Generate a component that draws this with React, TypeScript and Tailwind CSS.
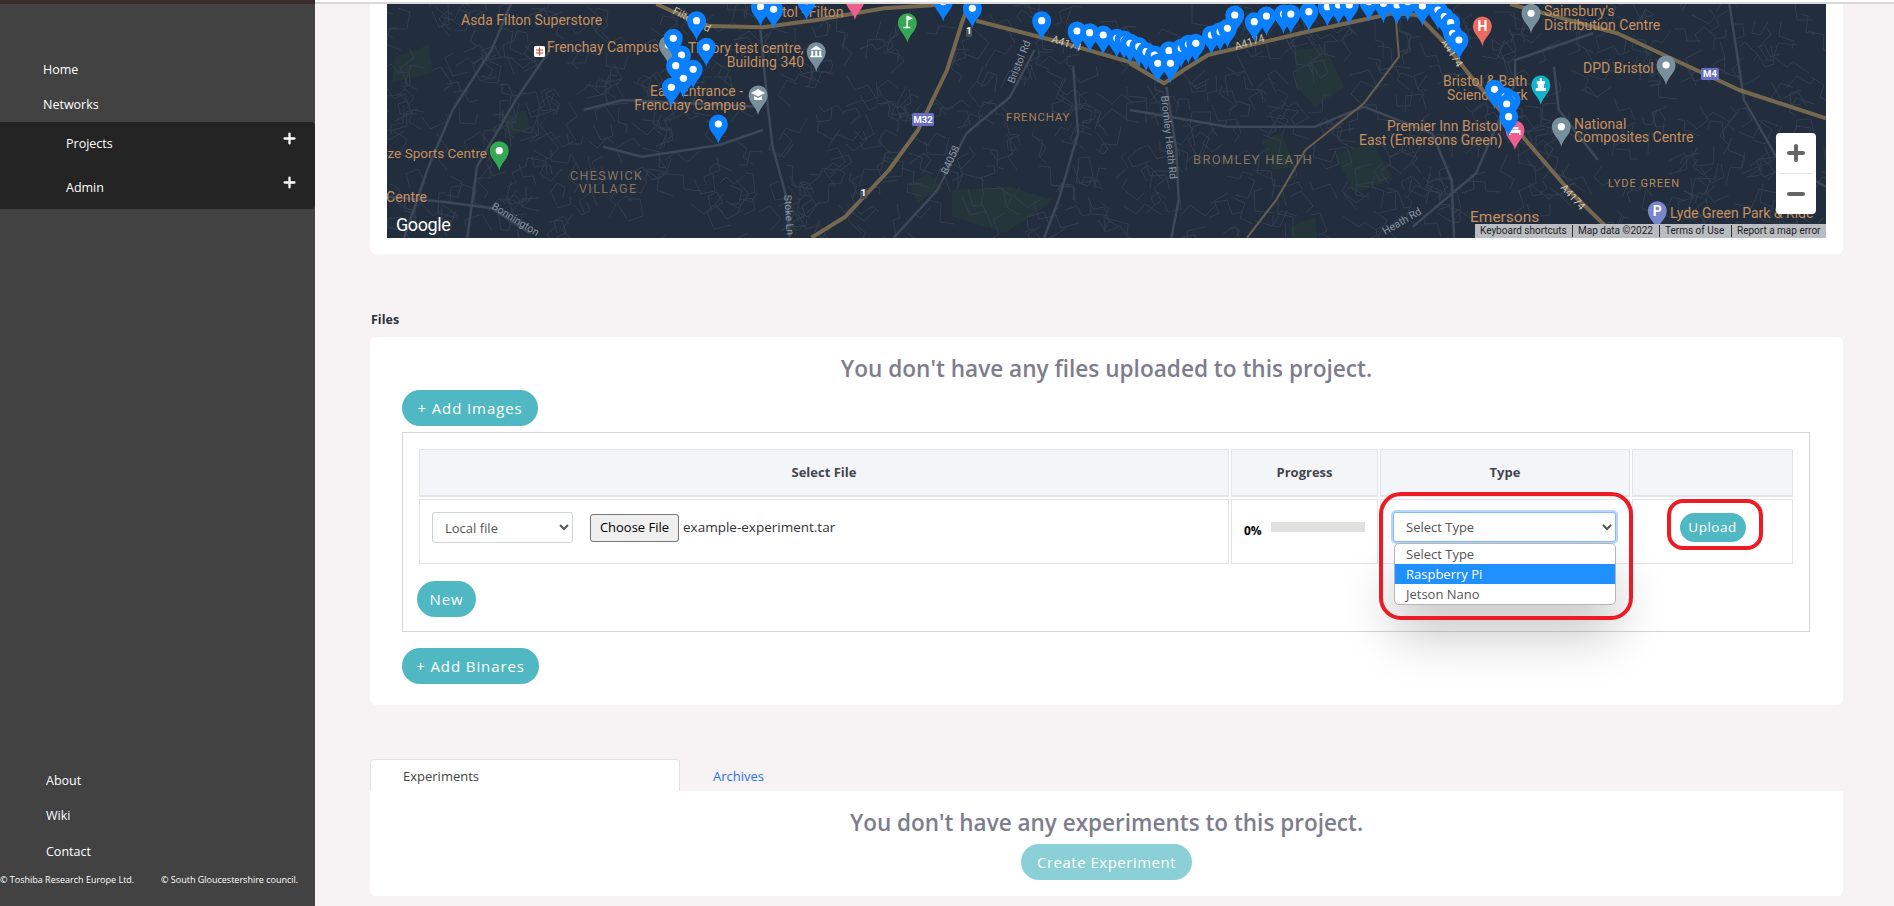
import { Plus, Minus } from "lucide-react";

type Pt = [number, number];
type Glyph = "H" | "P" | "museum" | "school" | "golf" | "bed" | "castle";

// map drawing is traced from two crops, so points are converted to page coords
const a = (x: number, y: number): Pt => [380 + x / 2.063, y / 3];
const b = (x: number, y: number): Pt => [1130 + x / 2.052, y / 3];
const line = (pts: Pt[]) => pts.map((p) => `${p[0].toFixed(1)},${p[1].toFixed(1)}`).join(" ");

const bluePins: Pt[] = [
  a(785, 20), a(812, 28), a(880, 2), a(1162, 5), a(1222, 25), a(653, 62), a(605, 115), a(673, 142), a(622, 165),
  a(646, 208), a(610, 197), a(626, 235), a(601, 262), a(698, 372), a(1365, 62), a(1438, 93), a(1464, 98), a(1492, 105),
  a(1520, 115), a(1535, 120), a(1548, 130), a(1565, 140),
  b(0, 130), b(18, 140), b(33, 155), b(50, 165), b(80, 152), b(105, 145), b(120, 133), b(135, 130), b(167, 105),
  b(185, 95), b(200, 85), b(215, 45), b(255, 65), b(280, 48), b(315, 42), b(330, 42), b(367, 35), b(405, 20),
  b(428, 15), b(450, 15), b(490, 5), b(520, 10), b(548, 15), b(570, 5), b(600, 18), b(632, 30), b(645, 50), b(658, 68), b(662, 100), b(675, 120),
  b(57, 190), b(83, 190), b(748, 268), b(770, 290), b(782, 300), b(773, 312), b(777, 350),
];

const otherPins: { p: Pt; c: string; glyph?: Glyph }[] = [
  { p: a(595, 135), c: "#78909c" },
  { p: a(900, 155), c: "#78909c", glyph: "museum" },
  { p: a(780, 285), c: "#78909c", glyph: "school" },
  { p: a(246, 452), c: "#34a853" },
  { p: a(1088, 68), c: "#34a853", glyph: "golf" },
  { p: a(980, 0), c: "#ec5f8f" },
  { p: b(823, 40), c: "#78909c" },
  { p: b(1100, 195), c: "#78909c" },
  { p: b(885, 380), c: "#78909c" },
  { p: b(843, 255), c: "#12b5cb", glyph: "castle" },
  { p: b(790, 390), c: "#ec5f8f", glyph: "bed" },
  { p: b(723, 78), c: "#ea6a5e", glyph: "H" },
  { p: b(1082, 632), c: "#7986cb", glyph: "P" },
];

const majorRoads: Pt[][] = [
  [a(570, 12), a(620, 45), a(680, 78), a(790, 82), a(900, 60), a(1040, 25), a(1180, 12)],
  [a(890, 713), a(960, 650), a(1050, 510), a(1110, 390), a(1170, 210), a(1200, 70), a(1215, 12)],
  [a(1230, 62), a(1400, 125), a(1568, 195)],
  [b(0, 190), b(40, 225), b(70, 250), b(110, 210), b(160, 165), b(350, 100), b(540, 40), b(590, 45), b(640, 120), b(700, 230), b(800, 400), b(900, 570), b(1000, 713)],
  [b(780, 12), b(1000, 100), b(1250, 270), b(1428, 355)],
];

const thinGold: Pt[][] = [
  [b(545, 50), b(552, 170), b(480, 310), b(360, 450), b(300, 600), b(240, 713)],
];

const mediumRoads: Pt[][] = [
  [a(270, 12), a(230, 150), a(150, 330), a(100, 500), a(50, 713)],
  [a(350, 150), a(280, 300), a(200, 500), a(180, 713)],
  [a(14, 590), a(130, 605), a(230, 625), a(310, 700)],
  [a(785, 90), a(800, 320), a(810, 440), a(840, 600), a(845, 713)],
  [a(1060, 713), a(1150, 570), a(1210, 400), a(1300, 290), a(1350, 150)],
  [a(1430, 200), a(1440, 400), a(1400, 600), a(1370, 713)],
  [a(420, 330), a(500, 300), a(780, 320)],
  [a(460, 440), a(540, 470), a(700, 435), a(790, 390)],
  [b(75, 260), b(95, 450), b(100, 600), b(85, 713)],
  [b(0, 330), b(200, 380), b(380, 380), b(480, 320)],
  [b(480, 320), b(620, 400), b(660, 540), b(665, 713)],
  [b(580, 680), b(710, 520), b(790, 250), b(790, 180), b(950, 100)],
  [b(870, 200), b(880, 330), b(960, 480)],
  [b(1230, 12), b(1260, 300), b(1330, 480), b(1428, 560)],
];

const greens: Pt[][] = [
  [a(30, 170), a(100, 135), a(110, 220), a(25, 245)],
  [a(255, 350), a(300, 330), a(310, 385), a(265, 410)],
  [a(1180, 570), a(1300, 560), a(1390, 600), a(1290, 700), a(1180, 650)],
  [a(1090, 550), a(1130, 520), a(1160, 560), a(1110, 610)],
  [b(340, 150), b(400, 140), b(440, 260), b(380, 320), b(340, 260)],
  [b(270, 420), b(310, 400), b(340, 500), b(290, 510)],
  [b(420, 460), b(500, 430), b(540, 540), b(460, 580)],
  [b(330, 680), b(380, 650), b(385, 713), b(330, 713)],
];

// small street texture, seeded so the picture stays the same between runs
function makeStreets() {
  const out: string[] = [];
  let seed = 41;
  const r = () => {
    seed = (seed * 16807) % 2147483647;
    return seed / 2147483647;
  };
  for (let i = 0; i < 800; i++) {
    let x = 387 + r() * 1439;
    let y = 4 + r() * 234;
    let d = `M${x.toFixed(0)} ${y.toFixed(0)}`;
    let ang = r() * 6.28;
    for (let j = 0; j < 3; j++) {
      const len = 7 + r() * 13;
      x += Math.cos(ang) * len;
      y += Math.sin(ang) * len;
      d += `L${x.toFixed(0)} ${y.toFixed(0)}`;
      ang += (r() > 0.5 ? 1 : -1) * 1.4;
    }
    out.push(d);
  }
  return out;
}
const streets = makeStreets();

function PinGlyph({ x, y, glyph }: { x: number; y: number; glyph?: Glyph }) {
  if (!glyph) return <circle cx={x} cy={y} r={3.6} fill="#fff" />;
  if (glyph === "H" || glyph === "P") {
    return (
      <text x={x} y={y + 5} fontSize={14} fontWeight={700} fill="#fff" textAnchor="middle">
        {glyph}
      </text>
    );
  }
  if (glyph === "museum") {
    return <path d={`M${x - 6} ${y - 2}L${x} ${y - 6}L${x + 6} ${y - 2}ZM${x - 5} ${y - 1}h2v5h-2zM${x - 1} ${y - 1}h2v5h-2zM${x + 3} ${y - 1}h2v5h-2zM${x - 6} ${y + 4}h12v1.5h-12z`} fill="#fff" />;
  }
  if (glyph === "school") {
    return <path d={`M${x} ${y - 6}L${x + 7} ${y - 2}L${x} ${y + 1.5}L${x - 7} ${y - 2}ZM${x - 4} ${y + 1}L${x} ${y + 3}L${x + 4} ${y + 1}V${y + 5}H${x - 4}Z`} fill="#fff" />;
  }
  if (glyph === "golf") {
    return <path d={`M${x - 1} ${y - 7}h1.5v12h-1.5zM${x + 0.5} ${y - 7}l5 2.5l-5 2.5zM${x - 4} ${y + 4}h7v1.5h-7z`} fill="#fff" />;
  }
  if (glyph === "bed") {
    return <path d={`M${x - 6} ${y - 4}h1.5v4h10v5h-1.5v-2h-8.5v2h-1.5zM${x - 3.5} ${y - 3}h7v2.5h-7z`} fill="#fff" />;
  }
  return <path d={`M${x - 1} ${y - 7}h2v3h3v3h-1v4h2v3h-10v-3h2v-4h-1v-3h3z`} fill="#fff" />;
}

function Pin({ p, c, glyph }: { p: Pt; c: string; glyph?: Glyph }) {
  const [x, y] = p;
  return (
    <g>
      <path
        d={`M${x} ${y + 20}C${x - 1.5} ${y + 12} ${x - 9.5} ${y + 8} ${x - 9.5} ${y}A9.5 9.5 0 1 1 ${x + 9.5} ${y}C${x + 9.5} ${y + 8} ${x + 1.5} ${y + 12} ${x} ${y + 20}Z`}
        fill={c}
      />
      <PinGlyph x={x} y={y} glyph={glyph} />
    </g>
  );
}

function Label({ x, y, t, end, size = 14, fill = "#c6905f", spacing, rotate }: { x: number; y: number; t: string; end?: boolean; size?: number; fill?: string; spacing?: number; rotate?: number }) {
  return (
    <text
      x={x}
      y={y}
      fontSize={size}
      fill={fill}
      letterSpacing={spacing}
      textAnchor={end ? "end" : "start"}
      transform={rotate ? `rotate(${rotate} ${x} ${y})` : undefined}
    >
      {t}
    </text>
  );
}

function Shield({ x, y, w, h, t, c }: { x: number; y: number; w: number; h: number; t: string; c: string }) {
  return (
    <g>
      <rect x={x} y={y} width={w} height={h} rx={1.5} fill={c} />
      <text x={x + w / 2} y={y + h - 3} fontSize={9.5} fontWeight={700} fill="#fff" textAnchor="middle">
        {t}
      </text>
    </g>
  );
}

function MapView() {
  return (
    <div className="relative h-[234px] w-full overflow-hidden bg-[#222d3d]">
      <svg viewBox="387 4 1439 234" className="block h-[234px] w-[1439px] font-['Roboto',sans-serif]">
        {greens.map((g, i) => (
          <polygon key={i} points={line(g)} fill="#243639" />
        ))}
        <g fill="none" stroke="#333e4e" strokeWidth={1}>
          {streets.map((d, i) => (
            <path key={i} d={d} />
          ))}
        </g>
        <g fill="none" stroke="#3d4858" strokeWidth={2.5} strokeLinejoin="round">
          {mediumRoads.map((r, i) => (
            <polyline key={i} points={line(r)} />
          ))}
        </g>
        {thinGold.map((r, i) => (
          <polyline key={i} points={line(r)} fill="none" stroke="#6d5f4f" strokeWidth={2} strokeLinejoin="round" />
        ))}
        {majorRoads.map((r, i) => (
          <polyline key={i} points={line(r)} fill="none" stroke="#76684f" strokeWidth={4} strokeLinejoin="round" />
        ))}

        <Shield x={912} y={113} w={22} h={13} t="M32" c="#6a6fc4" />
        <Shield x={1701} y={68} w={18} h={12} t="M4" c="#6a6fc4" />
        <Shield x={860} y={189} w={7} h={10} t="1" c="#4a5059" />
        <Shield x={966} y={27} w={6} h={10} t="1" c="#4a5059" />

        <Label x={461} y={25} t="Asda Filton Superstore" />
        <Label x={547} y={52} t="Frenchay Campus" />
        <Label x={688} y={53} t="Theory test centre," />
        <Label x={804} y={67} t="Building 340" end />
        <Label x={743} y={96} t="East Entrance -" end />
        <Label x={746} y={110} t="Frenchay Campus" end />
        <Label x={487} y={158} t="ze Sports Centre" end size={13.5} />
        <Label x={427} y={202} t="Centre" end />
        <Label x={758} y={17} t="Bristol - Filton" />
        <Label x={570} y={180} t="CHESWICK" size={12.5} spacing={1.4} fill="#85745f" />
        <Label x={579} y={193} t="VILLAGE" size={12.5} spacing={1.4} fill="#85745f" />
        <Label x={1006} y={121} t="FRENCHAY" size={11.5} spacing={0.8} fill="#a98259" />
        <Label x={1544} y={16} t="Sainsbury's" />
        <Label x={1544} y={30} t="Distribution Centre" />
        <Label x={1583} y={73} t="DPD Bristol" />
        <Label x={1443} y={86} t="Bristol & Bath" />
        <Label x={1447} y={100} t="Science Park" />
        <Label x={1387} y={131} t="Premier Inn Bristol" />
        <Label x={1359} y={145} t="East (Emersons Green)" />
        <Label x={1574} y={129} t="National" />
        <Label x={1574} y={142} t="Composites Centre" />
        <Label x={1608} y={187} t="LYDE GREEN" size={11} spacing={1} fill="#b98a5c" />
        <Label x={1670} y={218} t="Lyde Green Park & Ride" />
        <Label x={1470} y={222} t="Emersons" size={15.5} />
        <Label x={1193} y={164} t="BROMLEY HEATH" size={13} spacing={1.3} fill="#85745f" />

        <Label x={1051} y={42} t="A4174" size={10.5} fill="#cfc4a8" rotate={18} />
        <Label x={1236} y={50} t="A4174" size={10.5} fill="#cfc4a8" rotate={-17} />
        <Label x={1441} y={42} t="A4174" size={10.5} fill="#cfc4a8" rotate={58} />
        <Label x={1560} y={188} t="A4174" size={10.5} fill="#cfc4a8" rotate={48} />
        <Label x={672} y={13} t="Filton Rd" size={10.5} fill="#cfc4a8" rotate={28} />
        <Label x={1014} y={84} t="Bristol Rd" size={10.5} fill="#8b95a3" rotate={-68} />
        <Label x={947} y={175} t="B4058" size={10.5} fill="#8b95a3" rotate={-65} />
        <Label x={784} y={195} t="Stoke Ln" size={10.5} fill="#8b95a3" rotate={86} />
        <Label x={491} y={208} t="Bonnington" size={10.5} fill="#8b95a3" rotate={32} />
        <Label x={1161} y={96} t="Bromley Heath Rd" size={10.5} fill="#8b95a3" rotate={84} />
        <Label x={1385} y={235} t="Heath Rd" size={10.5} fill="#8b95a3" rotate={-30} />

        {/* little white square rail sign */}
        <rect x={534} y={46} width={11} height={11} rx={1.5} fill="#fff" />
        <path d="M536 50h7M536 53h7M539.5 47.5v8" stroke="#d6453a" strokeWidth={1.2} />

        {otherPins.map((m, i) => (
          <Pin key={i} p={m.p} c={m.c} glyph={m.glyph} />
        ))}
        {bluePins.map((p, i) => (
          <Pin key={i} p={p} c="#0a80ff" />
        ))}
      </svg>

      <span className="absolute left-[9px] top-[211px] font-['Roboto',sans-serif] text-[18px] leading-5 tracking-[-0.4px] text-white">
        Google
      </span>
      <div className="absolute left-[1389px] top-[129px] flex h-[81px] w-10 flex-col items-center rounded-sm bg-white text-[#666]">
        <div className="flex h-10 items-center justify-center">
          <Plus size={24} strokeWidth={4} />
        </div>
        <div className="h-px w-8 bg-[#e6e6e6]" />
        <div className="flex h-10 items-center justify-center">
          <Minus size={24} strokeWidth={4} />
        </div>
      </div>
      <div className="absolute bottom-0 right-0 flex h-[14px] w-[351px] items-center bg-[#b9bcc1] font-['Roboto',sans-serif] text-[10px] text-[#222]">
        <span className="w-[98px] border-r border-[#333] pl-[5px] leading-3">Keyboard shortcuts</span>
        <span className="w-[87px] border-r border-[#333] pl-[5px] leading-3">Map data ©2022</span>
        <span className="w-[72px] border-r border-[#333] pl-[5px] leading-3">Terms of Use</span>
        <span className="pl-[5px] leading-3">Report a map error</span>
      </div>
    </div>
  );
}

function PillButton({ children, className }: { children: React.ReactNode; className: string }) {
  return (
    <button className={`flex h-9 items-center justify-center rounded-[18px] bg-[#50b8c2] text-[15px] tracking-[0.9px] text-white ${className}`}>
      {children}
    </button>
  );
}

function SideLink({ label, pl }: { label: string; pl: string }) {
  return <div className={`flex h-[35px] items-center text-[12.5px] text-white ${pl}`}>{label}</div>;
}

function SubLink({ label }: { label: string }) {
  return (
    <div className="flex h-[44px] items-center justify-between pl-[66px] pr-[17px] text-[12.5px] text-white">
      <span>{label}</span>
      <Plus size={17} strokeWidth={3.2} className="-translate-y-[6px]" />
    </div>
  );
}

export default function App() {
  return (
    <div className="flex h-[906px] w-[1894px] overflow-hidden bg-[#f7f3f5] font-['Open_Sans',sans-serif]">
      {/* 사이드바 */}
      <aside className="flex h-full w-[315px] shrink-0 flex-col bg-[#424242]">
        <div className="h-1 bg-[#3a2c2a]" />
        <div className="pt-[48px]">
          <SideLink label="Home" pl="pl-[43px] pt-[2px]" />
          <SideLink label="Networks" pl="pl-[43px] pt-[2px]" />
        </div>
        <div className="h-[87px] rounded-r-[4px] bg-[#242424]">
          <SubLink label="Projects" />
          <SubLink label="Admin" />
        </div>
        <div className="mt-auto pb-[17px]">
          <SideLink label="About" pl="pl-[46px]" />
          <SideLink label="Wiki" pl="pl-[46px]" />
          <SideLink label="Contact" pl="pl-[46px] pt-[2px]" />
          <div className="mt-[2px] flex whitespace-nowrap text-[9px] leading-[18px] text-white">
            <span className="w-[161px]">© Toshiba Research Europe Ltd.</span>
            <span>© South Gloucestershire council.</span>
          </div>
        </div>
      </aside>

      {/* 본문 */}
      <main className="min-w-0 flex-1">
        <div className="h-1 border-b-2 border-[#d8d8d8] bg-white" />
        <div className="ml-[55px] w-[1473px]">
          <section className="rounded-b-[6px] bg-white px-[17px] pb-4">
            <MapView />
          </section>

          <div className="mb-[9px] mt-[58px] pl-px text-[12.5px] font-bold leading-4 text-[#2d3040]">Files</div>

          <section className="rounded-[6px] bg-white px-8 pb-[21px] pt-4">
            <h2 className="text-center text-[22.6px] font-semibold leading-8 text-[#7d7d8e]">
              You don't have any files uploaded to this project.
            </h2>
            <PillButton className="mt-[5px] w-[136px]">+ Add Images</PillButton>

            <div className="mt-[6px] h-[200px] w-[1408px] border border-[#d5d5d8] px-[14px] pt-[14px]">
              <table className="w-full table-fixed border-separate border-spacing-[2px] text-[13px] text-[#44454f]">
                <thead>
                  <tr className="h-[48px] bg-[#f4f5f9] font-bold">
                    <th className="w-[810px] border border-b-2 border-[#e3e4ea]">Select File</th>
                    <th className="w-[147px] border border-b-2 border-[#e3e4ea]">Progress</th>
                    <th className="w-[250px] border border-b-2 border-[#e3e4ea]">Type</th>
                    <th className="border border-b-2 border-[#e3e4ea]"></th>
                  </tr>
                </thead>
                <tbody>
                  <tr className="h-[65px]">
                    <td className="border border-[#e3e4ea] pl-3 align-top">
                      <div className="flex items-center pt-3 text-[#333]">
                        <select className="h-[31px] w-[141px] rounded-[3px] border border-[#ced4da] bg-white pl-[8px] text-[13px] text-[#555]">
                          <option>Local file</option>
                        </select>
                        <button className="ml-[17px] h-7 w-[89px] rounded-[3px] border border-[#767676] bg-[#efefef] text-[13px] text-black">
                          Choose File
                        </button>
                        <span className="ml-1 text-[13.5px]">example-experiment.tar</span>
                      </div>
                    </td>
                    <td className="border border-[#e3e4ea] pl-[12px] align-top">
                      <div className="flex items-start pt-[22px]">
                        <span className="w-[27px] text-[12px] font-bold leading-[18px] text-black">0%</span>
                        <div className="h-[10px] w-[94px] bg-[#e0e0de]" />
                      </div>
                    </td>
                    <td className="relative border border-[#e3e4ea] pl-3 align-top">
                      <div className="relative z-20 pt-3">
                        <select className="block h-[30px] w-[223px] rounded-[3px] border border-[#80bdff] bg-white pl-[8px] text-[13px] text-[#555] shadow-[0_0_0_2px_#b9d7fb]">
                          <option>Select Type</option>
                        </select>
                        <div className="absolute left-px top-[43px] z-20 w-[222px] overflow-hidden rounded-[5px] border border-[#b5b5b5] bg-white text-[13px] leading-5 text-[#555] shadow-[0_30px_50px_rgba(0,0,0,0.22)]">
                          <div className="pl-[11px]">Select Type</div>
                          <div className="bg-[#1e90ff] pl-[11px] text-white">Raspberry Pi</div>
                          <div className="pl-[11px]">Jetson Nano</div>
                        </div>
                      </div>
                      <div className="absolute -left-[2px] -top-[8px] z-30 h-[128px] w-[254px] rounded-[22px] border-4 border-[#ed1c24]" />
                    </td>
                    <td className="relative border border-[#e3e4ea] align-top">
                      <div className="flex justify-center pt-[13px]">
                        <button className="flex h-[29px] w-[66px] items-center justify-center rounded-[15px] bg-[#50b8c2] text-[13.5px] tracking-[0.5px] text-white">
                          Upload
                        </button>
                      </div>
                      <div className="absolute left-[34px] -top-px h-[51px] w-[96px] rounded-[16px] border-4 border-[#ed1c24]" />
                    </td>
                  </tr>
                </tbody>
              </table>
              <PillButton className="mt-[15px] w-[59px]">New</PillButton>
            </div>

            <PillButton className="mt-4 w-[137px]">+ Add Binares</PillButton>
          </section>

          <div className="mt-[54px] flex h-8 items-center text-[13px]">
            <div className="flex h-8 w-[310px] items-center rounded-t-[4px] border border-b-0 border-[#e2e2e4] bg-white pl-8 pt-[2px] text-[#444]">
              Experiments
            </div>
            <div className="pl-[33px] pt-[3px] text-[#2a6fe8]">Archives</div>
          </div>
          <section className="flex h-[105px] flex-col items-center rounded-b-[6px] bg-white pt-4">
            <h2 className="text-[22.5px] font-semibold leading-8 text-[#7d7d8e]">You don't have any experiments to this project.</h2>
            <button className="mt-[5px] flex h-9 w-[171px] items-center justify-center rounded-[18px] bg-[#8bd0d7] text-[15px] tracking-[0.5px] text-white">
              Create Experiment
            </button>
          </section>
        </div>
      </main>
    </div>
  );
}
